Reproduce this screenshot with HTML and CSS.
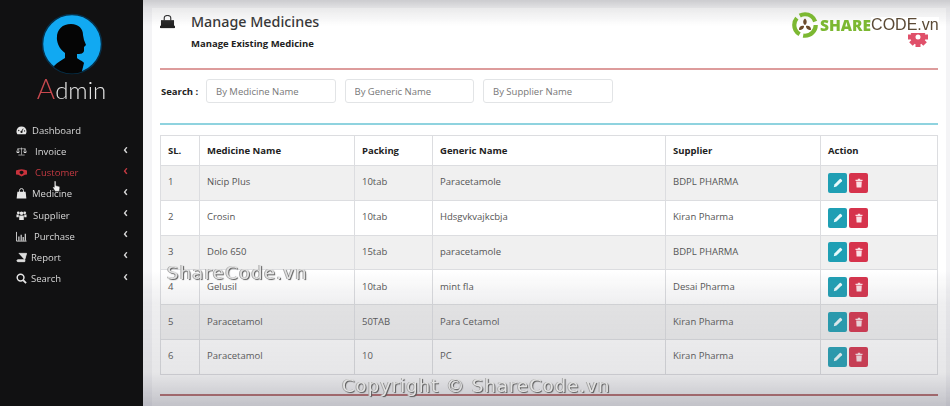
FILE: index.html
```html
<!DOCTYPE html>
<html lang="en">
<head>
<meta charset="utf-8">
<title>Manage Medicines</title>
<link rel="stylesheet" href="styles.css">
</head>
<body>
<svg class="defs" aria-hidden="true">
  <symbol id="pencil" viewBox="0 0 10 10"><path d="M.8 9.200 1.400 6.500 6.800 1.100a.8.8 0 0 1 1.100 0l1 1a.8.8 0 0 1 0 1.100L3.500 8.600z" fill="#eafafc"/></symbol>
  <symbol id="trash" viewBox="0 0 10 10"><path d="M1.500 1.800h7v1.200h-7zM3.800.7h2.400v1.200H3.800zM2.200 3.500h5.600L7.400 9.500H2.600z" fill="#fbdfe4"/></symbol>
</svg>
<div class="app">
  <aside class="sidebar">
    <div class="profile">
      <svg class="avatar" viewBox="0 0 62 62" width="62" height="62">
        <defs><clipPath id="disc"><circle cx="31" cy="31" r="29.500"/></clipPath></defs>
        <circle cx="31" cy="31" r="29.500" fill="#11a9f2" stroke="#06304a" stroke-width="1.500"/>
        <path clip-path="url(#disc)" d="M13 53C17 49 21 47 24 45L24 40C20 37 17 33 16 27 15 17 21 11 30 11 38 11 42 16 42 22L43 27 45 32 43 34 43 38C42 41 39 41 36 41L36 45C38 47 42 48 43 50L40 62H15z" fill="#050505"/>
      </svg>
      <div class="brand"><span class="brand-a">A</span>dmin</div>
    </div>
    <nav class="menu">
      <a class="item"><svg class="ico" viewBox="0 0 12 12"><path d="M6 1.500A5.500 5.500 0 0 0 .5 7c0 1.300.4 2.300 1 3h9c.6-.7 1-1.700 1-3A5.500 5.500 0 0 0 6 1.500z" fill="#e6e6e6"/><circle cx="6" cy="7.500" r="1.200" fill="#111"/><path d="M6 7.500 7.800 4" stroke="#111" stroke-width=".9"/><circle cx="3" cy="6" r=".7" fill="#111"/><circle cx="9.300" cy="6.500" r=".7" fill="#111"/></svg><span class="lbl">Dashboard</span></a>
      <a class="item shift3"><svg class="ico" viewBox="0 0 14 12"><path d="M7 1v9M3 10.500h8M2 2.500h10M2.500 2.500.8 6.500h3.400zM11.500 2.500 9.800 6.500h3.400z" stroke="#ddd" stroke-width=".8" fill="none"/><path d="M.8 6.500a1.700 1.500 0 0 0 3.400 0zM9.800 6.500a1.700 1.500 0 0 0 3.400 0z" fill="#ddd"/></svg><span class="lbl">Invoice</span><span class="chev">‹</span></a>
      <a class="item shift3 active"><svg class="ico" viewBox="0 0 14 12"><path d="M0 3.500 3 2.500 7 2l4 .5 3 1v5l-2.500.5L7 11 3 9l-3-.5z" fill="#c8323c"/><path d="M4.500 5C6 3.500 8.500 3.500 9.500 5S8 8 7 8.500C6 8 4 6.500 4.500 5z" fill="#111"/></svg><span class="lbl">Customer</span><span class="chev">‹</span></a>
      <a class="item"><svg class="ico" viewBox="0 0 12 12"><path d="M1.500 4h9l.8 7.500H.7z" fill="#e6e6e6"/><path d="M3.800 5V2.800a2.200 2.200 0 0 1 4.400 0V5" stroke="#e6e6e6" fill="none"/></svg><span class="lbl">Medicine</span><span class="chev">‹</span></a>
      <a class="item shift1"><svg class="ico" viewBox="0 0 12 12"><circle cx="2.500" cy="3" r="1.500" fill="#e6e6e6"/><circle cx="9.500" cy="3" r="1.500" fill="#e6e6e6"/><circle cx="6" cy="3.500" r="2" fill="#e6e6e6"/><path d="M.5 5H3v3H.5zM9 5h2.500v3H9zM3.500 6h5v5h-5z" fill="#e6e6e6"/></svg><span class="lbl">Supplier</span><span class="chev">‹</span></a>
      <a class="item shift2"><svg class="ico" viewBox="0 0 12 12"><path d="M.5 1v10h11" stroke="#ddd" fill="none"/><path d="M2.500 6h1.300v4.500H2.500zM5 4h1.300v6.500H5zM7.200 6.500h1.300v4H7.200zM9.500 3h1.300v7.500H9.500z" fill="#ddd"/></svg><span class="lbl">Purchase</span><span class="chev">‹</span></a>
      <a class="item back1"><svg class="ico" viewBox="0 0 12 12"><path d="M3 1.500h8.500L9.500 8.500H2C.7 8.500.7 10.500 2 10.500h7.500l.5-1.200" stroke="#ddd" fill="#ddd"/></svg><span class="lbl">Report</span><span class="chev">‹</span></a>
      <a class="item back1"><svg class="ico" viewBox="0 0 12 12"><circle cx="5" cy="5" r="3.700" stroke="#e6e6e6" stroke-width="1.600" fill="none"/><path d="M7.800 7.800 11 11" stroke="#e6e6e6" stroke-width="2"/></svg><span class="lbl">Search</span><span class="chev">‹</span></a>
    </nav>
    <svg class="cursor" viewBox="0 0 10 14" width="9" height="13"><path d="M3 1c.6-.6 1.400 0 1.400.6V6l3 .8c1 .3 1.500 1 1.300 2L8 12.500H3.500L1 8.500c-.3-1 .6-1.400 1.500-.6V1.500z" fill="#f2f2f2" stroke="#222" stroke-width=".6"/></svg>
  </aside>

  <main class="content">
    <div class="card">
      <header class="page-head">
        <svg class="head-ico" viewBox="0 0 16 15" width="15" height="14"><path d="M1 5.500h14V14H1z" fill="#222"/><path d="M0 11.500h16V14H0z" fill="#222"/><path d="M4.500 6V3.500a3.500 3 0 0 1 7 0V6" stroke="#222" stroke-width="1.200" fill="none"/></svg>
        <div class="head-text">
          <h1>Manage Medicines</h1>
          <p>Manage Existing Medicine</p>
        </div>
      </header>
      <div class="rule rule-red"></div>
      <form class="search">
        <label>Search :</label>
        <input placeholder="By Medicine Name">
        <input placeholder="By Generic Name">
        <input placeholder="By Supplier Name">
      </form>
      <div class="rule rule-blue"></div>
      <table>
        <colgroup><col class="c1"><col class="c2"><col class="c3"><col class="c4"><col class="c5"><col class="c6"></colgroup>
        <thead>
          <tr><th>SL.</th><th>Medicine Name</th><th>Packing</th><th>Generic Name</th><th>Supplier</th><th>Action</th></tr>
        </thead>
        <tbody>
          <tr><td>1</td><td>Nicip Plus</td><td>10tab</td><td>Paracetamole</td><td>BDPL PHARMA</td><td class="act"><span class="btn edit"><svg><use href="#pencil"/></svg></span><span class="btn del"><svg><use href="#trash"/></svg></span></td></tr>
          <tr><td>2</td><td>Crosin</td><td>10tab</td><td>Hdsgvkvajkcbja</td><td>Kiran Pharma</td><td class="act"><span class="btn edit"><svg><use href="#pencil"/></svg></span><span class="btn del"><svg><use href="#trash"/></svg></span></td></tr>
          <tr><td>3</td><td>Dolo 650</td><td>15tab</td><td>paracetamole</td><td>BDPL PHARMA</td><td class="act"><span class="btn edit"><svg><use href="#pencil"/></svg></span><span class="btn del"><svg><use href="#trash"/></svg></span></td></tr>
          <tr><td>4</td><td>Gelusil</td><td>10tab</td><td>mint fla</td><td>Desai Pharma</td><td class="act"><span class="btn edit"><svg><use href="#pencil"/></svg></span><span class="btn del"><svg><use href="#trash"/></svg></span></td></tr>
          <tr><td>5</td><td>Paracetamol</td><td>50TAB</td><td>Para Cetamol</td><td>Kiran Pharma</td><td class="act"><span class="btn edit"><svg><use href="#pencil"/></svg></span><span class="btn del"><svg><use href="#trash"/></svg></span></td></tr>
          <tr><td>6</td><td>Paracetamol</td><td>10</td><td>PC</td><td>Kiran Pharma</td><td class="act"><span class="btn edit"><svg><use href="#pencil"/></svg></span><span class="btn del"><svg><use href="#trash"/></svg></span></td></tr>
        </tbody>
      </table>
      <div class="rule rule-red rule-bottom"></div>
    </div>
  </main>
</div>

<div class="shade"></div>
<svg class="gear" viewBox="0 0 20 20" width="20" height="20"><circle cx="10" cy="10" r="5" fill="none" stroke="#e0506a" stroke-width="5"/><path d="M7.500 0h5v4h-5zM7.500 16h5v4h-5zM0 7.500h4v5H0zM16 7.500h4v5h-4z" fill="#e0506a"/><path d="M7.500 0h5v4h-5zM7.500 16h5v4h-5zM0 7.500h4v5H0zM16 7.500h4v5h-4z" fill="#e0506a" transform="rotate(45 10 10)"/></svg>
<div class="logo">
  <svg viewBox="0 0 30 30" width="28" height="28"><circle cx="15" cy="15" r="11.500" fill="none" stroke="#7cb832" stroke-width="4.500" stroke-dasharray="20 4"/><path d="M15 8c2.500 2 2.500 5.500 0 7-2.500-1.500-2.500-5 0-7zM8.500 20c0-3.500 3-5 5.500-3.800 0 2.800-2.500 5-5.500 3.800zM21.500 20c-3 1.200-5.500-1-5.500-3.800 2.500-1.200 5.500.3 5.500 3.800z" fill="#6b4a2a"/></svg>
  <span class="logo-s">SHARE</span><span class="logo-c">CODE.vn</span>
</div>
<div class="mark mark-a">ShareCode.vn</div>
<div class="mark mark-b">Copyright © ShareCode.vn</div>
</body>
</html>
```
FILE: styles.css
```css
* { box-sizing: border-box; }
html, body { margin: 0; height: 406px; overflow: hidden; }
body { font-family: "Open Sans", "Noto Sans", sans-serif; background: #f4f4f6; color: #444; position: relative; }
.defs { display: none; }
.app { display: flex; height: 406px; filter: blur(.35px); }

.sidebar { width: 143px; flex: none; background: #111112; position: relative; }
.profile { display: flex; flex-direction: column; align-items: center; padding-top: 13px; }
.avatar { display: block; }
.brand { font-family: "Lato", sans-serif; font-weight: 300; font-size: 24px; line-height: 26px; color: #e4e4e4; }
.brand-a { color: #c8484e; font-size: 28px; }
.menu { display: flex; flex-direction: column; margin-top: 17px; padding-left: 16px; }
.item { display: flex; align-items: center; height: 21.150px; color: #d8d8d8; font-size: 9.500px; padding-right: 15px; }
.item.shift1 .lbl { margin-left: 1px; }
.item.shift2 .lbl { margin-left: 2px; }
.item.shift3 .lbl { margin-left: 3px; }
.item.back1 .lbl { margin-left: -1px; }
.item.active { color: #c53a42; }
.ico { width: 11px; height: 11px; flex: none; margin-right: 5px; }
.lbl { flex: 1; }
.chev { font-size: 14px; line-height: 14px; font-weight: 600; margin-top: -6px; }
.cursor { position: absolute; left: 52px; top: 180px; }

.content { flex: 1; padding: 8px 5px 0 9px; }
.card { background: #fff; height: 398px; padding: 5px 8px 0 8px; }
.page-head { display: flex; height: 55px; }
.head-ico { margin-top: 2px; flex: none; }
.head-text { margin-left: 16px; }
h1 { margin: -1px 0 0; font-family: "Noto Sans", sans-serif; font-size: 14.300px; line-height: 20px; font-weight: 500; color: #333; }
.head-text p { margin: 5px 0 0; font-size: 9.500px; line-height: 14px; font-weight: 700; color: #222; }
.rule { height: 2px; margin: 0; }
.rule-red { background: #dd9c9c; }
.rule-blue { background: #8fd3df; }
.rule-bottom { margin-top: 19px; background: #b86464; }
.search { display: flex; align-items: center; height: 53px; gap: 9px; padding-bottom: 11px; }
.search label { font-size: 9.500px; font-weight: 700; color: #222; width: 37px; flex: none; white-space: nowrap; padding-left: 1px; }
.search input { width: 129.500px; height: 24px; border: 1px solid #e2e4e6; border-radius: 3px; padding: 0 9px; font: 9.500px "Open Sans", sans-serif; background: #fff; }
.search input::placeholder { color: #777; }

table { border-collapse: collapse; table-layout: fixed; width: 777px; margin-top: 10px; font-size: 9.500px; }
.c1 { width: 39px; } .c2 { width: 155px; } .c3 { width: 78px; } .c4 { width: 233px; } .c5 { width: 155px; } .c6 { width: 117px; }
th, td { border: 1px solid #dcdde0; padding: 0 7px; text-align: left; }
th { height: 30px; font-weight: 700; font-size: 9.500px; color: #222; }
td { height: 34.800px; color: #555; padding-bottom: 2px; }
td.act { padding-bottom: 0; }
tbody tr:nth-child(odd) { background: #f0f0f0; }
.act { white-space: nowrap; }
.btn { display: inline-flex; align-items: center; justify-content: center; width: 19px; height: 20px; border-radius: 2px; vertical-align: middle; margin-right: 2px; }
.btn svg { width: 10px; height: 10px; }
.edit { background: #1f9fb4; }
.del { background: #d6334c; }

.shade { position: absolute; top: 0; right: 0; bottom: 0; left: 143px; pointer-events: none;
  background:
    linear-gradient(to bottom, rgba(170,170,175,.55) 0, rgba(170,170,175,.25) 8px, rgba(170,170,175,0) 26px),
    linear-gradient(to bottom, rgba(120,120,130,0) 270px, rgba(120,120,130,.12) 304px, rgba(120,120,130,.18) 372px, rgba(110,110,125,.42) 406px);
  background-repeat: no-repeat; }
.logo { position: absolute; left: 791px; top: 11px; display: flex; align-items: center; line-height: 28px; }
.logo-s { color: #7cb832; font-weight: 800; font-family: "Open Sans", sans-serif; font-size: 15.500px; margin-left: 1px; }
.logo-c { color: #5b4a36; font-family: "Liberation Sans", sans-serif; font-size: 16px; line-height: 16px; background: #fff; }
.gear { position: absolute; left: 908px; top: 27px; }
.mark { position: absolute; font-family: "DejaVu Sans", sans-serif; color: #e2e2e2; text-shadow: 1px 1px 1px #555, -1px 0 0 #aaa; white-space: nowrap; font-size: 18px; line-height: 22px; letter-spacing: 1.050px; }
.mark-a { left: 167px; top: 262px; letter-spacing: 1.250px; }
.mark-b { left: 342px; top: 375px; }
```
